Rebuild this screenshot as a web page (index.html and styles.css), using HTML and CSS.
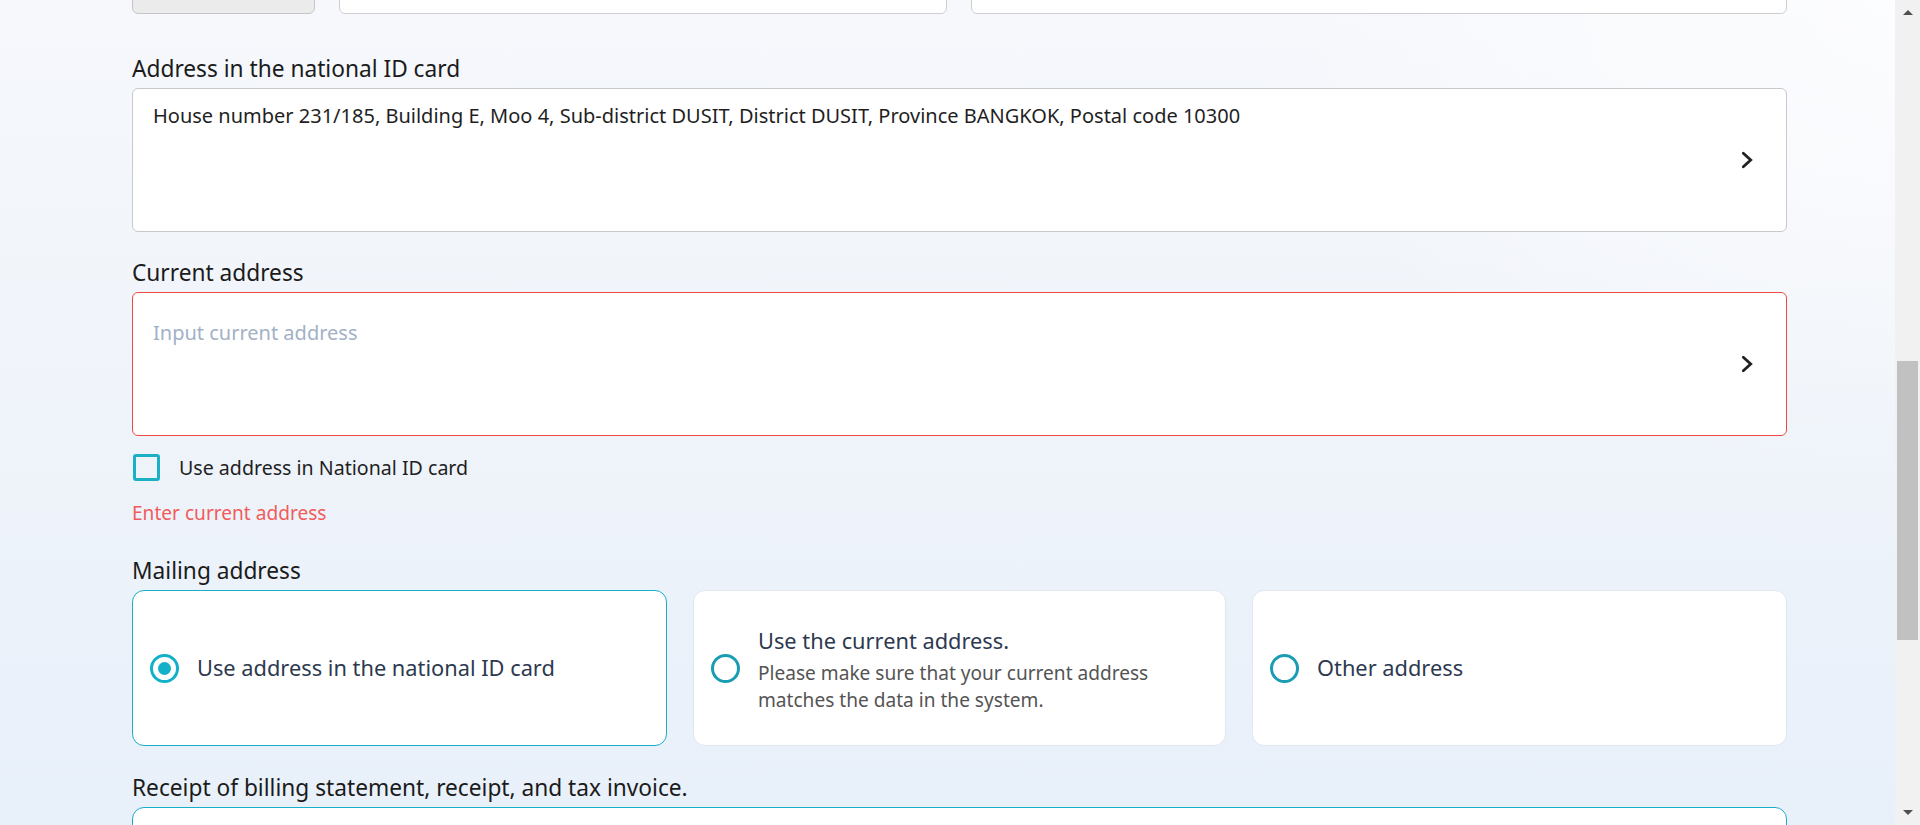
FILE: index.html
```html
<!DOCTYPE html>
<html lang="en">
<head>
<meta charset="utf-8">
<title>Address form</title>
<link rel="stylesheet" href="styles.css">
</head>
<body>
<div class="screen">
  <main class="page">
    <div class="form">
      <div class="top-row">
        <div class="field-stub stub-gray"></div>
        <div class="field-stub"></div>
        <div class="field-stub"></div>
      </div>

      <div class="label label-first">Address in the national ID card</div>
      <div class="addr-box">
        <div class="addr-text">House number 231/185, Building E, Moo 4, Sub-district DUSIT, District DUSIT, Province BANGKOK, Postal code 10300</div>
        <svg class="chev" viewBox="0 0 12 18" width="12" height="18" aria-hidden="true"><path d="M2.3 2.3 L9.7 9 L2.3 15.7" fill="none" stroke="#222" stroke-width="2.8" stroke-linecap="round" stroke-linejoin="miter"/></svg>
      </div>

      <div class="label">Current address</div>
      <div class="addr-box addr-error">
        <div class="addr-text placeholder">Input current address</div>
        <svg class="chev" viewBox="0 0 12 18" width="12" height="18" aria-hidden="true"><path d="M2.3 2.3 L9.7 9 L2.3 15.7" fill="none" stroke="#222" stroke-width="2.8" stroke-linecap="round" stroke-linejoin="miter"/></svg>
      </div>

      <div class="check-row">
        <span class="checkbox"></span>
        <span class="check-text">Use address in National ID card</span>
      </div>
      <div class="error-text">Enter current address</div>

      <div class="label label-mail">Mailing address</div>
      <div class="cards">
        <div class="card selected">
          <span class="radio on"></span>
          <div class="card-text"><div class="card-title">Use address in the national ID card</div></div>
        </div>
        <div class="card">
          <span class="radio"></span>
          <div class="card-text shifted">
            <div class="card-title">Use the current address.</div>
            <div class="card-sub">Please make sure that your current address<br>matches the data in the system.</div>
          </div>
        </div>
        <div class="card">
          <span class="radio"></span>
          <div class="card-text"><div class="card-title">Other address</div></div>
        </div>
      </div>

      <div class="label label-receipt">Receipt of billing statement, receipt, and tax invoice.</div>
      <div class="receipt-box">
        <span class="checkbox light"></span>
      </div>
    </div>
  </main>
  <aside class="scrollbar">
    <div class="sb-btn"><span class="tri-up"></span></div>
    <div class="sb-gap"></div>
    <div class="sb-thumb"></div>
    <div class="sb-fill"></div>
    <div class="sb-btn"><span class="tri-down"></span></div>
  </aside>
</div>
</body>
</html>
```
FILE: styles.css
```css
html, body {
  margin: 0;
  padding: 0;
  height: 100%;
  overflow: hidden;
}

body {
  font-family: "Noto Sans", "Open Sans", sans-serif;
  color: #1c1c1c;
}

.screen {
  display: flex;
  width: 1920px;
  height: 825px;
}

.page {
  flex: 1;
  overflow: hidden;
  background:
    radial-gradient(ellipse 900px 700px at 100% 0%, rgba(255,255,255,0.7), rgba(255,255,255,0) 70%),
    linear-gradient(to bottom, #f6f8fc 0%, #f0f4fa 45%, #e8f0fa 100%);
}

.form {
  width: 1655px;
  margin-left: 132px;
  margin-top: -36px;
}

.top-row {
  display: grid;
  grid-template-columns: 183px 608px 1fr;
  column-gap: 24px;
  height: 50px;
}

.field-stub {
  background: #fff;
  border: 1px solid #cfcfcf;
  border-radius: 6px;
}

.stub-gray {
  background: #ebebeb;
  border-color: #c6c6c6;
}

.label {
  font-size: 22.7px;
  line-height: 30px;
  color: #1b1b1b;
  margin: 26px 0 4px;
}

.label-first { margin-top: 40px; }
.label-mail { margin-top: 30px; }
.label-receipt { margin-top: 27px; }

.addr-box {
  display: flex;
  height: 144px;
  box-sizing: border-box;
  border: 1px solid #c9c9c9;
  border-radius: 6px;
  background: #fff;
  padding: 0 33px 0 20px;
}

.addr-error {
  border-color: #ef4a3f;
}

.addr-text {
  flex: 1;
  font-size: 20px;
  line-height: 28px;
  color: #1f1f1f;
  padding-top: 13px;
}

.placeholder {
  color: #a2b1c6;
  padding-top: 26px;
}

.chev {
  flex: none;
  align-self: center;
  display: block;
}

.check-row {
  display: flex;
  align-items: center;
  gap: 19px;
  height: 27px;
  margin-top: 18px;
  margin-left: 1px;
}

.checkbox {
  display: block;
  flex: none;
  width: 27px;
  height: 27px;
  box-sizing: border-box;
  border: 3px solid #1cb0c7;
  border-radius: 3px;
}

.check-text {
  font-size: 19.6px;
  line-height: 27px;
  color: #1f1f1f;
}

.error-text {
  font-size: 19.1px;
  line-height: 26px;
  color: #f15b5b;
  margin-top: 19px;
}

.cards {
  display: grid;
  grid-template-columns: 535px 533px 535px;
  column-gap: 26px;
}

.card {
  height: 156px;
  box-sizing: border-box;
  border: 1px solid #e1e7ef;
  border-radius: 12px;
  background: #fff;
  display: flex;
  align-items: center;
  gap: 18px;
  padding: 0 17px;
}

.card.selected {
  border-color: #17aec6;
}

.radio {
  flex: none;
  width: 29px;
  height: 29px;
  box-sizing: border-box;
  border: 3.5px solid #1a9db2;
  border-radius: 50%;
  display: flex;
  align-items: center;
  justify-content: center;
}

.radio.on {
  border-color: #12b0c9;
}

.radio.on::after {
  content: "";
  width: 13px;
  height: 13px;
  border-radius: 50%;
  background: #12b0c9;
}

.card-title {
  font-size: 21.8px;
  line-height: 30px;
  color: #2d3950;
}

.card-sub {
  font-size: 19.1px;
  line-height: 27px;
  color: #545454;
  margin-top: 4px;
}

.shifted {
  padding-top: 4px;
}

.receipt-box {
  height: 120px;
  box-sizing: border-box;
  border: 1px solid #17aec6;
  border-radius: 12px;
  background: #fff;
  padding: 18px 20px;
}

.checkbox.light {
  width: 24px;
  height: 24px;
  border-color: #b6e1e9;
}

.scrollbar {
  flex: none;
  width: 25px;
  height: 825px;
  background: #f1f1f1;
  display: flex;
  flex-direction: column;
  align-items: center;
}

.sb-btn {
  height: 25px;
  width: 100%;
  display: flex;
  align-items: center;
  justify-content: center;
  flex: none;
}

.tri-up {
  width: 0;
  height: 0;
  border-left: 5.5px solid transparent;
  border-right: 5.5px solid transparent;
  border-bottom: 5.5px solid #505050;
}

.tri-down {
  width: 0;
  height: 0;
  border-left: 5.5px solid transparent;
  border-right: 5.5px solid transparent;
  border-top: 5.5px solid #505050;
}

.sb-gap {
  height: 336px;
  flex: none;
}

.sb-thumb {
  width: 21px;
  height: 279px;
  background: #c1c1c1;
  flex: none;
}

.sb-fill {
  flex: 1;
}
```
